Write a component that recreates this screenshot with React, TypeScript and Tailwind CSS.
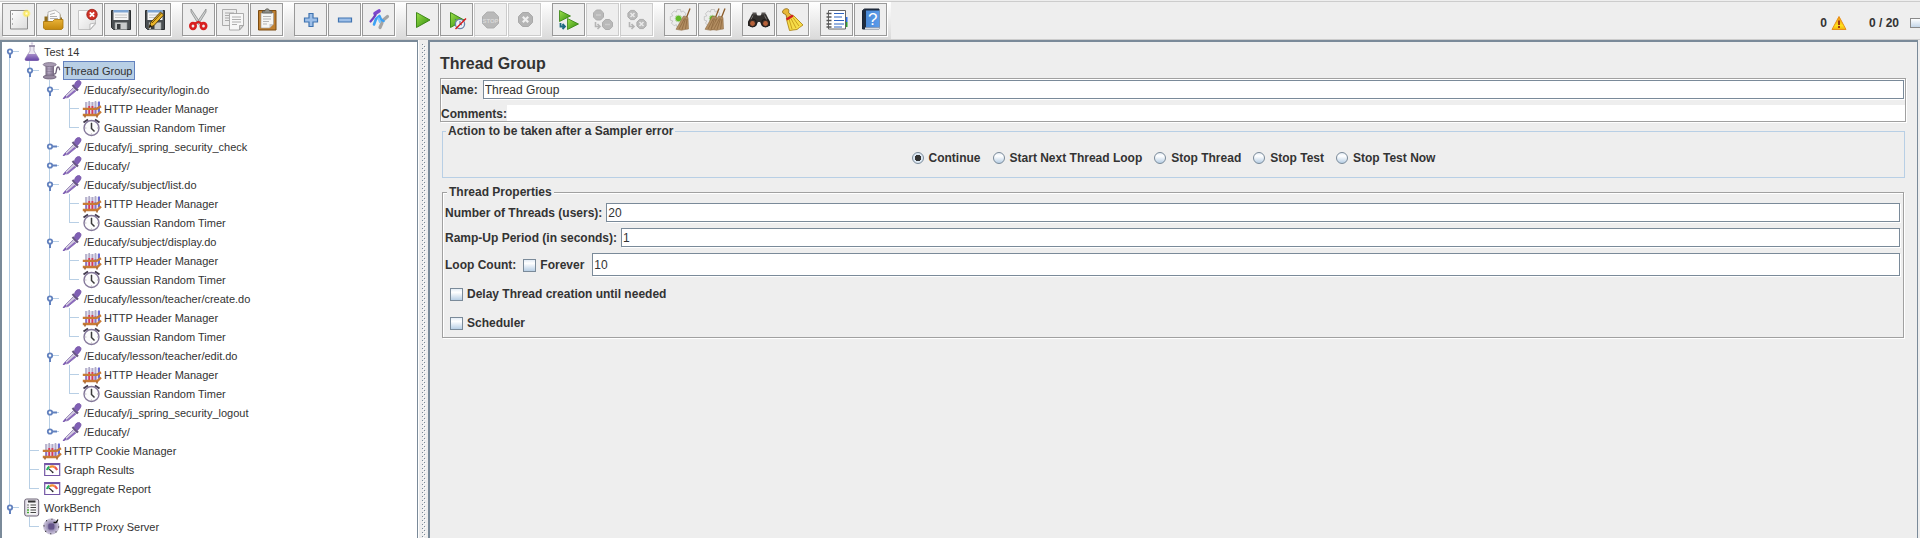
import React, { useState } from "react";

/* ---------- toolbar icons (31 x 31 drawing area) ---------- */

function Defs() {
  return (
    <svg className="absolute h-0 w-0" aria-hidden="true">
      <defs>
        <linearGradient id="paper" x1="0" y1="0" x2="1" y2="1">
          <stop offset="0" stopColor="#ffffff" />
          <stop offset="1" stopColor="#dcdcdc" />
        </linearGradient>
        <linearGradient id="folder" x1="0" y1="0" x2="0" y2="1">
          <stop offset="0" stopColor="#e8b238" />
          <stop offset="1" stopColor="#c4880c" />
        </linearGradient>
        <linearGradient id="green" x1="0" y1="0" x2="1" y2="1">
          <stop offset="0" stopColor="#9be04a" />
          <stop offset="1" stopColor="#2f8a0c" />
        </linearGradient>
        <linearGradient id="blue" x1="0" y1="0" x2="1" y2="0">
          <stop offset="0" stopColor="#4a8ad8" />
          <stop offset="1" stopColor="#5b9bea" />
        </linearGradient>
        <linearGradient id="violet" x1="0" y1="0" x2="0" y2="1">
          <stop offset="0" stopColor="#a58cc8" />
          <stop offset="1" stopColor="#6543a6" />
        </linearGradient>
        <linearGradient id="spool" x1="0" y1="0" x2="1" y2="0">
          <stop offset="0" stopColor="#75677f" />
          <stop offset="0.4" stopColor="#b9acc6" />
          <stop offset="1" stopColor="#75677f" />
        </linearGradient>
        <linearGradient id="warn" x1="0" y1="0" x2="0" y2="1">
          <stop offset="0" stopColor="#f08a10" />
          <stop offset="0.7" stopColor="#ffe21a" />
          <stop offset="1" stopColor="#f0b010" />
        </linearGradient>
        <radialGradient id="glow">
          <stop offset="0" stopColor="#fffde0" />
          <stop offset="0.5" stopColor="#fbe860" />
          <stop offset="1" stopColor="#fbe860" stopOpacity="0" />
        </radialGradient>
        <radialGradient id="sphere">
          <stop offset="0" stopColor="#57467c" />
          <stop offset="0.5" stopColor="#9a8fb6" />
          <stop offset="1" stopColor="#cfc8dd" />
        </radialGradient>
        <pattern id="bumps" width="4" height="4" patternUnits="userSpaceOnUse">
          <rect width="1" height="1" fill="#7a8a99" />
          <rect x="1" y="1" width="1" height="1" fill="#fff" />
          <rect x="2" y="2" width="1" height="1" fill="#7a8a99" />
          <rect x="3" y="3" width="1" height="1" fill="#fff" />
        </pattern>
      </defs>
    </svg>
  );
}

const Disk = () => (
  <g>
    <path d="M6.5 6.5h19v19h-17l-2-2z" fill="#4a4f52" stroke="#2b2e30" />
    <path d="M8.5 6h15v10h-15z" fill="#f4f4f4" />
    <path d="M8.5 6h15v2.5h-15z" fill="#7fa6d4" />
    <path d="M10 11h12M10 13.5h12" stroke="#c4c4c4" />
    <path d="M10 18.5h12v7H10z" fill="#c9cccc" stroke="#8c9090" strokeWidth=".6" />
    <path d="M12 20h3.5v5H12z" fill="#3a3e40" />
  </g>
);

const Gear = () => (
  <g>
    <path
      d="M12 5.500h3.500l.6 2.600 2-1.200 2.900 2.800-1.300 2.200 2.600.7v3.600l-2.600.7 1.300 2.200-2.900 2.700-2-1.200-.6 2.400H12l-.6-2.400-2.200 1.200-2.700-2.700 1.300-2.200-2.500-.7v-3.600l2.500-.7L6.500 9.700l2.700-2.800 2.200 1.200z"
      fill="#ececec"
      stroke="#b8b8b8"
      strokeWidth=".7"
    />
    <circle cx="13.500" cy="14.500" r="3.300" fill="#62bb28" stroke="#c0d8b0" />
  </g>
);

const Broom = () => (
  <g>
    <path d="M25 4.500l-3.500 9" stroke="#8a5a28" strokeWidth="1.300" />
    <path d="M18.500 12l4.500 1.500.5 11.500-3.500.5-3.500.8-5.500-1z" fill="#b38e62" stroke="#86623a" strokeWidth=".5" />
    <path d="M19.500 14.500l-5.500 10.500M20.500 14.500l-3.500 11M22 15l-1.500 10" stroke="#86623a" strokeWidth=".7" />
  </g>
);

const octagon = (cx: number, cy: number, r: number) => {
  const k = r * 0.42;
  return `M${cx - k} ${cy - r}L${cx + k} ${cy - r}L${cx + r} ${cy - k}L${cx + r} ${cy + k}L${cx + k} ${cy + r}L${cx - k} ${cy + r}L${cx - r} ${cy + k}L${cx - r} ${cy - k}Z`;
};

const toolIcons: Record<string, React.ReactNode> = {
  New: (
    <g>
      <path d="M7.500 6.500h17v18.500h-17z" fill="url(#paper)" stroke="#8a8a8a" />
      <path d="M9.500 9v2M9.500 14v2M9.500 19v2" stroke="#b0b0b0" />
      <circle cx="23.500" cy="9.500" r="4.500" fill="url(#glow)" />
    </g>
  ),
  Open: (
    <g>
      <path d="M7.500 19v-6.500h3v-2h13v3h1.500V19z" fill="#8f6c1c" />
      <path d="M11 8l7-2 5 3.500V18H11z" fill="#fafafa" stroke="#a8a8a8" strokeWidth=".8" />
      <path d="M13 10.500l5-1.500M13 12.500h7M13 14.500h8" stroke="#a0a0a0" strokeWidth=".8" />
      <path d="M6.500 17.500h9l2-2h8.500v8.500l-1.500 1.500H8L6.500 24z" fill="url(#folder)" stroke="#a87408" strokeWidth=".8" />
    </g>
  ),
  Close: (
    <g>
      <path d="M7.500 6.500h17V20l-5 5.500h-12z" fill="url(#paper)" stroke="#b8b8b8" strokeWidth=".8" />
      <path d="M24.500 19l-5.500 1v5.500z" fill="#fff" stroke="#a8a8a8" strokeWidth=".7" />
      <circle cx="21" cy="10.500" r="5.200" fill="#d03428" stroke="#991810" strokeWidth=".8" />
      <path d="M18.800 8.300l4.400 4.400m0-4.400l-4.400 4.400" stroke="#fff" strokeWidth="1.800" />
    </g>
  ),
  Save: <Disk />,
  "Save as": (
    <g>
      <Disk />
      <path d="M10 23.500l2-5.500L21.500 8l3.200 3L15 21.500z" fill="#e8b428" stroke="#4a3408" strokeWidth=".9" />
      <path d="M13 19l9.500-10" stroke="#6b4a08" strokeWidth="1" />
      <path d="M10 23.500l1-3 2 1.800z" fill="#111" />
    </g>
  ),
  Cut: (
    <g>
      <path d="M8 5l9.500 14-2 1.200L8 8zM23 5l-9.500 14 2 1.200L23 8z" fill="#d0d2d2" stroke="#7c8080" strokeWidth=".7" />
      <ellipse cx="10" cy="22" rx="2.700" ry="2.900" fill="none" stroke="#d82020" strokeWidth="2.600" />
      <ellipse cx="20.500" cy="22" rx="2.700" ry="2.900" fill="none" stroke="#d82020" strokeWidth="2.600" />
      <path d="M12 19.500l3.300-1.700 3.300 1.700" fill="none" stroke="#d82020" strokeWidth="2" />
    </g>
  ),
  Copy: (
    <g stroke="#9a9a9a" strokeWidth=".8">
      <path d="M5.500 5.500h14v16h-14z" fill="#ececec" />
      <path d="M8 9h9M8 11.500h4M8 14h4M8 16.500h4" />
      <path d="M12.500 9.500h14v12l-4 4.500h-10z" fill="#f7f7f7" />
      <path d="M15 13h9M15 15.500h9M15 18h9M15 20.500h5" />
      <path d="M26.500 21.500h-4v4.500z" fill="#d4d4d4" />
    </g>
  ),
  Paste: (
    <g>
      <path d="M7.500 6.500h17.500v19.500H7.500z" fill="#c08030" stroke="#7c4c12" />
      <path d="M10 9h12.500v11l-4 4H10z" fill="#f6f6f4" stroke="#999" strokeWidth=".6" />
      <path d="M22.500 20h-4v4z" fill="#c8c8c8" />
      <path d="M12 12.500h8M12 15h8M12 17.500h6M12 20h4" stroke="#a4a4a4" strokeWidth=".8" />
      <path d="M11.500 9V7h2.500c0-3 4.500-3 4.500 0H21v2z" fill="#8f8f88" stroke="#55554f" strokeWidth=".7" />
    </g>
  ),
  "Expand All": (
    <path d="M14 9.500h4v4.500h4.500v4H18v4.500h-4V18H9.500v-4H14z" fill="#9dbfe8" stroke="#3f73b0" strokeWidth="1.200" />
  ),
  "Collapse All": <path d="M9.500 14h13v4h-13z" fill="#9dbfe8" stroke="#3f73b0" strokeWidth="1.200" />,
  Toggle: (
    <g strokeLinecap="round" strokeLinejoin="round" fill="none">
      <path d="M24.500 12.500l-3 2.500-3 2.500M19 19l-2 4.500" stroke="#a4a4a4" strokeWidth="3.200" />
      <path d="M12 9.500l4-2.500" stroke="#7c48cc" strokeWidth="3.600" />
      <path d="M7.500 17.500l2.500-3 2.500-3.500" stroke="#7040c0" strokeWidth="2.200" />
      <path d="M11 20.500l2-5.500 3.500-3 1.500 3.500 2.500 1.500" stroke="#3ca0f4" strokeWidth="2.600" />
      <path d="M15.500 14.500l1.500 3.500" stroke="#78c8ff" strokeWidth="2.200" />
    </g>
  ),
  Start: <path d="M9.500 8.500L23 16 9.500 23.500z" fill="url(#green)" stroke="#33800f" strokeWidth=".9" />,
  "Start no pauses": (
    <g>
      <path d="M9.500 8.500L23 16 9.500 23.500z" fill="url(#green)" stroke="#33800f" strokeWidth=".9" />
      <circle cx="19" cy="20" r="4.600" fill="#eef3fa" stroke="#6a84ac" strokeWidth="1.300" />
      <path d="M19 17v3l2 1M15 16l-1-1M23 16l1-1" stroke="#4a6690" fill="none" />
      <path d="M14.500 25L25 14.500" stroke="#d81818" strokeWidth="1.400" />
    </g>
  ),
  Stop: (
    <g>
      <path d={octagon(15.5, 16, 8)} fill="#b9b9b9" stroke="#adadad" />
      <text x="15.5" y="18.500" textAnchor="middle" fontSize="6" fontWeight="700" fill="#d8d8d8" fontFamily="Liberation Sans, sans-serif">
        STOP
      </text>
    </g>
  ),
  Shutdown: (
    <g>
      <path d={octagon(16.5, 15.5, 7)} fill="#b4b4b4" stroke="#a9a9a9" />
      <path d="M13.800 12.800l5.400 5.400m0-5.400l-5.400 5.400" stroke="#efefef" strokeWidth="2.200" />
    </g>
  ),
  "Remote Start All": (
    <g>
      <path d="M6.500 6.500L17.500 12 6.500 17.500z" fill="url(#green)" stroke="#33800f" strokeWidth=".8" />
      <path d="M14.500 14.500L25.500 20l-11 5.500z" fill="url(#green)" stroke="#33800f" strokeWidth=".8" />
      <path d="M7.500 19v3.500h4M9.500 20l2.500 2.500-2.500 2.500" fill="none" stroke="#1d6a80" strokeWidth="1.800" />
    </g>
  ),
  "Remote Stop All": (
    <g>
      <path d={octagon(11.5, 11, 5)} fill="#b9b9b9" stroke="#adadad" />
      <path d={octagon(20.5, 20.5, 5)} fill="#b9b9b9" stroke="#adadad" />
      <path d="M9 11h5M18 20.500h5" stroke="#cbcbcb" strokeWidth="1.500" />
      <path d="M8.500 18v4.500h4M10.500 20l2.500 2.500-2.500 2.500" fill="none" stroke="#b5b5b5" strokeWidth="1.600" />
    </g>
  ),
  "Remote Shutdown All": (
    <g>
      <path d={octagon(11.5, 11, 4.6)} fill="#b9b9b9" stroke="#adadad" />
      <path d={octagon(20.5, 20, 4.6)} fill="#b9b9b9" stroke="#adadad" />
      <path d="M9.500 9l4 4m0-4l-4 4M18.500 18l4 4m0-4l-4 4" stroke="#eaeaea" strokeWidth="1.500" />
      <path d="M8.500 18v4.500h4M10.500 20l2.500 2.500-2.500 2.500" fill="none" stroke="#b5b5b5" strokeWidth="1.600" />
    </g>
  ),
  Clear: (
    <g>
      <Gear />
      <Broom />
    </g>
  ),
  "Clear All": (
    <g>
      <Gear />
      <g transform="translate(-5 0)">
        <Broom />
      </g>
      <g transform="translate(1 0)">
        <Broom />
      </g>
    </g>
  ),
  Search: (
    <g>
      <path d="M9 10l4-.5 1.500 2h3l1.500-2 4 .5 4 8v4h-8l-2-4h-2l-2 4H5v-4z" fill="#33302e" />
      <path d="M9.500 8.500h4v2h-4zM18.500 8.500h4v2h-4z" fill="#5a5654" />
      <circle cx="9.500" cy="19" r="4" fill="#3a2d26" stroke="#1c1a19" />
      <circle cx="22.500" cy="19" r="4" fill="#3a2d26" stroke="#1c1a19" />
      <circle cx="9.500" cy="19.500" r="2.400" fill="#b8623a" />
      <circle cx="22.500" cy="19.500" r="2.400" fill="#b8623a" />
      <path d="M10 11.500l-2 4M21.500 11.500l2 4" stroke="#777270" />
    </g>
  ),
  "Reset Search": (
    <g>
      <path d="M5.500 8c0-2.500 4-4.500 6-2.500.8 1.500-.3 2.500.3 3.500l3.200 2.500-5 3.500-1-4C8.500 9.500 6 10.500 5.500 8z" fill="#e8b838" stroke="#8a6208" strokeWidth=".8" />
      <path d="M9.500 15.500l7-4 9.500 9.500-3.500 2.500-2.500 2-4 .5-3.500.5z" fill="#f6dc48" stroke="#a87c08" strokeWidth=".8" />
      <path d="M12 15l3 10M14 14.500l5 9.500M16 13.500l6 8.500" stroke="#c49a18" strokeWidth=".9" />
      <path d="M9.500 15.500l6.500-4" stroke="#d02020" strokeWidth="2.600" />
    </g>
  ),
  "Function Helper": (
    <g>
      <path d="M24.500 13h2v5h-2z" fill="#2a70e8" />
      <path d="M24.500 18h2v5h-2z" fill="#30a030" />
      <path d="M7.500 6.500h17v18.500h-17z" fill="#fff" stroke="#555" strokeWidth=".9" />
      <path d="M13 9.500h10M13 13h8M13 16.500h10M13 20h10M13 23h8" stroke="#2f64c0" strokeWidth="1.200" />
      <path d="M5.500 9.500h5M5.500 13h5M5.500 16.500h5M5.500 20h5M5.500 23h5" stroke="#555" strokeWidth="1.500" />
    </g>
  ),
  Help: (
    <g>
      <path d="M7.500 6.500l2-1.500h14.500v20H7.500z" fill="#1e2c40" stroke="#1a2434" />
      <path d="M11 6.500h13.500v17H11z" fill="url(#blue)" />
      <path d="M10 25.500h14.500v-2H10z" fill="#d8dde4" />
      <text x="17.800" y="21" textAnchor="middle" fontSize="17" fill="#fff" fontFamily="Liberation Sans, sans-serif">
        ?
      </text>
    </g>
  ),
};

const toolGroups: { name: string; off?: boolean }[][] = [
  [{ name: "New" }, { name: "Open" }, { name: "Close" }, { name: "Save" }, { name: "Save as" }],
  [{ name: "Cut" }, { name: "Copy" }, { name: "Paste" }],
  [{ name: "Expand All" }, { name: "Collapse All" }, { name: "Toggle" }],
  [{ name: "Start" }, { name: "Start no pauses" }, { name: "Stop", off: true }, { name: "Shutdown", off: true }],
  [{ name: "Remote Start All" }, { name: "Remote Stop All", off: true }, { name: "Remote Shutdown All", off: true }],
  [{ name: "Clear" }, { name: "Clear All" }],
  [{ name: "Search" }, { name: "Reset Search" }],
  [{ name: "Function Helper" }, { name: "Help" }],
];

function Toolbar() {
  return (
    <header className="flex h-10 items-stretch border-b border-[#ccc] bg-[#eee] pt-px">
      <div className="flex gap-[11px] border-t border-[#ccc] bg-linear-to-b from-white to-[#dadada] pt-px pr-1 pl-0.5">
        {toolGroups.map((group, i) => (
          <div key={i} className="flex gap-px">
            {group.map((tool) => (
              <button
                key={tool.name}
                type="button"
                aria-label={tool.name}
                disabled={tool.off}
                className="h-[33px] w-[33px] border border-[#999] bg-[#eee] shadow-[1px_1px_0_#fff] disabled:border-[#ccc]"
              >
                <svg viewBox="0 0 31 31" className="block h-[31px] w-[31px]">
                  {toolIcons[tool.name]}
                </svg>
              </button>
            ))}
          </div>
        ))}
      </div>
      <div className="flex flex-1 items-center justify-end border-t border-[#ccc] pt-1 font-bold">
        <span>0</span>
        <svg viewBox="0 0 16 16" className="mr-[22px] ml-1 h-4 w-4">
          <path d="M8 1.500L15 14.500H1z" fill="url(#warn)" stroke="#e89018" strokeLinejoin="round" />
          <path d="M8 5.500v4.500M8 11v2" stroke="#a03c10" strokeWidth="2" />
        </svg>
        <span>0 / 20</span>
        <span className="ml-[11px] h-2.5 w-2.5 border border-r-0 border-[#8a8a8a] bg-linear-to-b from-white to-[#c4d6e8]" />
      </div>
    </header>
  );
}

/* ---------- tree ---------- */

type Kind = "flask" | "spool" | "dropper" | "rack" | "clock" | "gauge" | "bench" | "proxy";

const treeIcons: Record<Kind, React.ReactNode> = {
  flask: (
    <g>
      <path d="M8 4h4v5l4.500 7c1 1.800.3 2.700-1.500 2.700H5c-1.800 0-2.500-.9-1.500-2.700L8 9z" fill="#ebe7f1" stroke="#a59cb6" strokeWidth=".8" />
      <path d="M6 12h8l2.700 4.500c.8 1.500 0 2.200-1.700 2.200H5c-1.700 0-2.500-.7-1.700-2.200z" fill="url(#violet)" />
      <path d="M7 4h6" stroke="#8d83a0" strokeWidth="1.600" />
      <circle cx="10" cy="1.500" r="1.200" fill="#d8d0e4" />
    </g>
  ),
  spool: (
    <g>
      <path d="M3.500 3.500h8.500v13H3.500z" fill="url(#spool)" />
      <ellipse cx="7.700" cy="3.600" rx="6.500" ry="2" fill="#a89bb2" stroke="#7b6e86" strokeWidth=".8" />
      <ellipse cx="7.700" cy="16" rx="6.500" ry="2" fill="#96899f" stroke="#6d6078" strokeWidth=".8" />
      <path d="M4 8h7.500M4 10.500h7.500M4 13h7.500" stroke="#7d7088" strokeWidth=".5" />
      <path d="M12 13c3.500.5 1.500-7 4-7 2 0 .8 2.500 2 3" fill="none" stroke="#6d6078" strokeWidth="1.300" />
    </g>
  ),
  dropper: (
    <g>
      <path d="M3.500 15.500L11.500 7.500l3 3-8.500 7-2.500.5z" fill="#d3cce0" stroke="#9482b4" strokeWidth=".9" />
      <path d="M4 17.300l8.500-7.300 1.500 1-8 6.500z" fill="#8a68bc" />
      <path d="M3.800 16l-2.500 3" stroke="#7a58b0" strokeWidth="1.700" />
      <path d="M10.500 5l5.500 5.500" stroke="#66577e" strokeWidth="2.200" />
      <path d="M12.500 6c0-2.500 1.500-5.500 4-5.500 2.300 0 3 2 2.200 3.700-.8 1.700-2.200 3.300-3.700 4.300z" fill="#8060b4" stroke="#7654a8" strokeWidth=".8" />
    </g>
  ),
  rack: (
    <g>
      <path d="M3.500 3h14.500v12H3.500z" fill="#e4e0ee" />
      <path d="M4 3v12M7.200 2v13M10.400 3v12M13.500 2v13" stroke="#b0acc8" strokeWidth="1.600" />
      <path d="M7.200 7v8M10.400 7v8" stroke="#dc3858" strokeWidth="1.800" />
      <path d="M4.200 9v6M13.500 8v7" stroke="#8a72c4" strokeWidth="1.800" />
      <path d="M17 2.500v11" stroke="#3838c4" strokeWidth="1.400" />
      <path d="M.8 9.800h14l4.200-2.500" fill="none" stroke="#c87a34" strokeWidth="2.200" />
      <path d="M.8 16h14.500l3.700-3.500" fill="none" stroke="#c87a34" strokeWidth="2.400" />
      <path d="M3 16.500v2M15 16.500v2" stroke="#9a5c28" strokeWidth="1.500" />
    </g>
  ),
  clock: (
    <g>
      <path d="M1.500 4.500l4.500-3M17.500 4.500l-4.500-3" stroke="#453d50" strokeWidth="2" />
      <circle cx="9.500" cy="10" r="7.500" fill="#fcfcfc" stroke="#84789a" strokeWidth="1.400" />
      <path d="M9.500 5v5.500l3 3" fill="none" stroke="#3a3a3a" strokeWidth="1.500" />
      <path d="M9.500 3.800v.8M9.500 15.500v1M3.300 10h1M15 10h1" stroke="#aaa" />
    </g>
  ),
  gauge: (
    <g>
      <path d="M2.700 3.500h15v12h-15z" fill="#fff" stroke="#7457a6" strokeWidth="1.200" />
      <path d="M2.500 4.200h15.500" stroke="#7457a6" strokeWidth="1.800" />
      <path d="M5 10c.5-1.500 1.200-2.500 2.400-3.200" fill="none" stroke="#28b060" strokeWidth="2.200" />
      <path d="M7.700 7c1.500-.8 3.500-.8 4.800 0" fill="none" stroke="#f09030" strokeWidth="2.200" />
      <path d="M12.500 7c1.200.7 2 1.700 2.600 3" fill="none" stroke="#f05848" strokeWidth="2.200" />
      <path d="M7 9l3.500 3" stroke="#333" strokeWidth="1.100" />
      <circle cx="10.700" cy="12.300" r=".9" fill="#333" />
    </g>
  ),
  bench: (
    <g>
      <rect x="2.700" y="1" width="14" height="17" rx="2" fill="#e6e2ea" stroke="#6c6476" />
      <path d="M5 4.500h9.500v12H5z" fill="#f8f8f8" />
      <path d="M6 3.500h7.500" stroke="#333" strokeWidth="2" />
      <path d="M8.500 7h5.500M8.500 9.500h5.500M8.500 12h5.500M8.500 14.500h5.500" stroke="#444" strokeWidth="1.200" />
      <path d="M5 12h2M5 14.500h2" stroke="#48a838" strokeWidth="1.300" />
      <path d="M5 7h2M5 9.500h2" stroke="#999" strokeWidth="1.300" />
    </g>
  ),
  proxy: (
    <g>
      <circle cx="9.300" cy="9.500" r="7.600" fill="url(#sphere)" stroke="#b4abc8" strokeWidth=".8" />
      <circle cx="9.300" cy="9.500" r="7.300" fill="none" stroke="#222" strokeWidth="1.100" strokeDasharray="1 4.730" />
      <rect x="6.300" y="6.500" width="6" height="6" rx="1.500" fill="#64548a" />
      <path d="M11.500 5.500h2.500l2-3" stroke="#111" strokeWidth="1.300" fill="none" />
    </g>
  ),
};

type Node = { label: string; icon: Kind; open?: boolean; children?: Node[]; selected?: boolean };

const pair = (): Node[] => [
  { label: "HTTP Header Manager", icon: "rack" },
  { label: "Gaussian Random Timer", icon: "clock" },
];
const shut = (label: string): Node => ({ label, icon: "dropper", open: false, children: [] });
const sampler = (label: string): Node => ({ label, icon: "dropper", open: true, children: pair() });

const tree: Node[] = [
  {
    label: "Test 14",
    icon: "flask",
    open: true,
    children: [
      {
        label: "Thread Group",
        icon: "spool",
        open: true,
        selected: true,
        children: [
          sampler("/Educafy/security/login.do"),
          shut("/Educafy/j_spring_security_check"),
          shut("/Educafy/"),
          sampler("/Educafy/subject/list.do"),
          sampler("/Educafy/subject/display.do"),
          sampler("/Educafy/lesson/teacher/create.do"),
          sampler("/Educafy/lesson/teacher/edit.do"),
          shut("/Educafy/j_spring_security_logout"),
          shut("/Educafy/"),
        ],
      },
      { label: "HTTP Cookie Manager", icon: "rack" },
      { label: "Graph Results", icon: "gauge" },
      { label: "Aggregate Report", icon: "gauge" },
    ],
  },
  {
    label: "WorkBench",
    icon: "bench",
    open: true,
    children: [{ label: "HTTP Proxy Server", icon: "proxy" }],
  },
];

function Guide({ up, down, branch, open }: { up: boolean; down: boolean; branch?: boolean; open?: boolean }) {
  return (
    <svg viewBox="0 0 20 19" className="h-[19px] w-5 shrink-0">
      {up && <path d="M7.500 0v9.500" stroke="#b8cfe5" />}
      {down && <path d="M7.500 9v10" stroke="#b8cfe5" />}
      {branch && <path d="M7 9.500h10" stroke="#b8cfe5" />}
      {open !== undefined && (
        <g stroke="#6382bf" strokeWidth="2">
          <path d={open ? "M8 12v4" : "M10 9.500h5"} />
          <circle cx="8" cy="9.500" r="2.200" fill="#fff" strokeWidth="1.800" />
        </g>
      )}
    </svg>
  );
}

function Branch({ nodes, trail }: { nodes: Node[]; trail: boolean[] }) {
  return (
    <ul>
      {nodes.map((n, i) => {
        const last = i === nodes.length - 1;
        const first = trail.length === 0 && i === 0;
        return (
          <li key={i}>
            <div className="flex h-[19px] items-center">
              {trail.map((on, k) => (
                <Guide key={k} up={on} down={on} />
              ))}
              <Guide up={!first} down={!last} branch open={n.open} />
              <svg viewBox="0 0 20 19" className="h-[19px] w-5 shrink-0">
                {treeIcons[n.icon]}
              </svg>
              <span
                className={
                  n.selected
                    ? "ml-px h-[19px] border border-[#6382bf] bg-[#b8cfe5] pr-0.5 leading-[18px] whitespace-nowrap"
                    : "ml-px h-[19px] border border-transparent pr-0.5 leading-[18px] whitespace-nowrap"
                }
              >
                {n.label}
              </span>
            </div>
            {n.open && n.children && <Branch nodes={n.children} trail={[...trail, !last]} />}
          </li>
        );
      })}
    </ul>
  );
}

/* ---------- form ---------- */

const inputClass =
  "min-w-0 flex-1 border border-[#7a8a99] bg-white px-px pt-px font-normal shadow-[1px_1px_0_#fff] outline-none";
const boxClass =
  "h-[13px] w-[13px] shrink-0 appearance-none border border-[#7a8a99] bg-linear-to-b from-[#e4edf6] via-white via-30% to-[#b8cfe5]";
const actions = ["Continue", "Start Next Thread Loop", "Stop Thread", "Stop Test", "Stop Test Now"];

function Field({ id, label, value, className }: { id: string; label: string; value: string; className: string }) {
  return (
    <div className="flex items-center gap-1">
      <label htmlFor={id} className="pt-px">
        {label}
      </label>
      <input id={id} defaultValue={value} className={`${inputClass} ${className}`} />
    </div>
  );
}

function ThreadGroup() {
  const [action, setAction] = useState("Continue");
  return (
    <main className="mr-0.5 min-w-0 flex-1 border-t-2 border-r border-l-2 border-[#7a8a99] pr-[11px] pl-2.5 leading-[14px] font-bold">
      <h1 className="pt-2.5 pb-0.5 text-base leading-6">Thread Group</h1>
      <div className="flex flex-col gap-1.5 border border-[#a0a0a0] pt-px shadow-[1px_1px_0_#fff,inset_1px_1px_0_#fff]">
        <div className="flex items-center gap-[5px] pr-px">
          <label htmlFor="name" className="pt-px">
            Name:
          </label>
          <input id="name" defaultValue="Thread Group" className={`${inputClass} h-[19px]`} />
        </div>
        <div className="flex h-4 items-center">
          <label htmlFor="comments" className="pt-0.5">
            Comments:
          </label>
          <input id="comments" className="h-4 min-w-0 flex-1 bg-white font-normal outline-none" />
        </div>
      </div>

      <fieldset className="mt-0.5 mr-px ml-0.5 border border-[#b8cfe5] px-[3px]">
        <legend className="px-0.5">Action to be taken after a Sampler error</legend>
        <div className="flex justify-center gap-3 pt-3 pb-[11px]">
          {actions.map((a) => (
            <label key={a} className="flex h-4 items-center gap-[5px]">
              <input
                type="radio"
                name="action"
                checked={action === a}
                onChange={() => setAction(a)}
                className="h-3 w-3 appearance-none rounded-full border border-[#7a8a99] bg-linear-to-b from-[#e4edf6] via-white via-30% to-[#b8cfe5] checked:bg-radial checked:from-[#333] checked:from-45% checked:via-[#dde8f3] checked:via-50% checked:to-[#dde8f3]"
              />
              {a}
            </label>
          ))}
        </div>
      </fieldset>

      <fieldset className="mt-[7px] mr-0.5 ml-0.5 border border-[#a0a0a0] pr-[3px] pl-0.5 shadow-[1px_1px_0_#fff,inset_1px_1px_0_#fff]">
        <legend className="ml-0.5 bg-[#eee] px-0.5">Thread Properties</legend>
        <div className="flex flex-col gap-1.5 pt-1">
          <Field id="threads" label="Number of Threads (users):" value="20" className="h-[19px]" />
          <Field id="ramp" label="Ramp-Up Period (in seconds):" value="1" className="h-[19px]" />
          <div className="flex items-center">
            <label htmlFor="loops" className="pt-px">
              Loop Count:
            </label>
            <label className="mr-2 ml-[7px] flex items-center gap-1 pt-px">
              <input type="checkbox" className={boxClass} />
              Forever
            </label>
            <input id="loops" defaultValue="10" className={`${inputClass} h-[23px]`} />
          </div>
        </div>
        <div className="flex flex-col items-start gap-4 pt-3 pb-[7px] pl-[5px] leading-[13px]">
          <label className="flex items-center gap-1">
            <input type="checkbox" className={boxClass} />
            Delay Thread creation until needed
          </label>
          <label className="flex items-center gap-1">
            <input type="checkbox" className={boxClass} />
            Scheduler
          </label>
        </div>
      </fieldset>
    </main>
  );
}

export default function App() {
  return (
    <div className="flex min-h-screen flex-col bg-[#eee] font-['Liberation_Sans',Arial,sans-serif] text-xs text-[#333]">
      <Defs />
      <Toolbar />
      <div className="flex flex-1">
        <nav className="w-[418px] shrink-0 border-t-2 border-r border-l-2 border-[#7a8a99] bg-white text-[11px]">
          <Branch nodes={tree} trail={[]} />
        </nav>
        <div className="flex w-2.5 shrink-0 justify-center border-l border-white">
          <svg className="mt-1 h-[calc(100%-4px)] w-1">
            <rect width="4" height="100%" fill="url(#bumps)" />
          </svg>
        </div>
        <ThreadGroup />
      </div>
    </div>
  );
}
